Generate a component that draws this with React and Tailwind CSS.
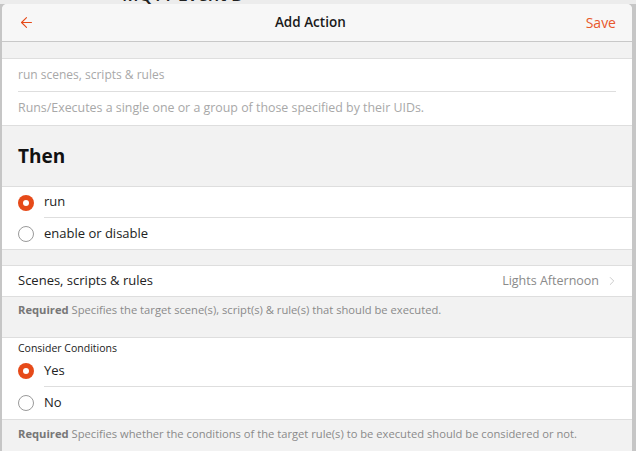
import { ArrowLeft, ChevronRight } from 'lucide-react'

const font = { fontFamily: '"Open Sans", "Noto Sans", sans-serif' }

const Radio = ({ checked }) =>
  checked ? (
    <span className="flex h-4 w-4 shrink-0 items-center justify-center rounded-full bg-[#e64a19]">
      <span className="h-[6px] w-[6px] rounded-full bg-white" />
    </span>
  ) : (
    <span className="h-4 w-4 shrink-0 rounded-full border border-[#9a9a9a] bg-white" />
  )

const RadioRow = ({ label, checked, last, tall }) => (
  <div className={`flex items-center pl-[16px] ${tall ? 'h-[32px]' : 'h-[31px]'}`}>
    <Radio checked={checked} />
    <div
      className={`ml-[10px] flex h-full flex-1 items-center text-[13px] text-[#222] ${
        last ? '' : 'border-b border-[#dedede]'
      }`}
    >
      {label}
    </div>
  </div>
)

export default function App() {
  return (
    <div className="flex h-[451px] w-[636px] flex-col overflow-hidden bg-[#c6c6c6]" style={font}>
      <div className="h-[4px] shrink-0 overflow-hidden bg-[#ececec] pl-[122px]">
        <div className="-mt-[17px] text-[18px] font-semibold leading-[22px] text-[#222]">MQTT Event B</div>
      </div>
      <div className="ml-[2px] mr-[4px] flex flex-1 flex-col overflow-hidden rounded-t-[5px] bg-[#f2f2f2]">
        <div className="flex h-[38px] shrink-0 items-center justify-between border-b border-[#c8c8c8] bg-[#f7f7f7] px-[16px]">
          <ArrowLeft className="h-[17px] w-[17px] text-[#e64a19]" strokeWidth={1.5} />
          <div className="text-[13.5px] font-semibold text-[#1a1a1a]">Add Action</div>
          <div className="text-[14px] text-[#e8582c]">Save</div>
        </div>

        <div className="mt-[16px] border-y border-[#dedede] bg-white">
          <div className="mx-[16px] flex h-[33px] items-center border-b border-[#dedede] text-[12px] text-[#a8a8a8]">
            run scenes, scripts &amp; rules
          </div>
          <div className="flex h-[33px] items-center px-[16px] text-[12.4px] text-[#a8a8a8]">
            Runs/Executes a single one or a group of those specified by their UIDs.
          </div>
        </div>

        <div className="flex h-[60px] items-center px-[16px] text-[19px] font-bold text-[#111]">Then</div>

        <div className="border-y border-[#dedede] bg-white">
          <RadioRow label="run" checked />
          <RadioRow label="enable or disable" last />
        </div>

        <div className="mt-[15px] flex h-[32px] items-center justify-between border-y border-[#dedede] bg-white pl-[16px] pr-[13px]">
          <span className="text-[13px] text-[#222]">Scenes, scripts &amp; rules</span>
          <span className="flex items-center text-[12.5px] text-[#8a8a8a]">
            Lights Afternoon
            <ChevronRight className="ml-[6px] h-[14px] w-[14px] text-[#c4c4c4]" strokeWidth={1.5} />
          </span>
        </div>
        <div className="h-[40px] px-[16px] pt-[5px] text-[11.2px] text-[#8a8a8a]">
          <b className="font-bold text-[#777]">Required</b> Specifies the target scene(s), script(s) &amp; rule(s) that
          should be executed.
        </div>

        <div className="border-y border-[#dedede] bg-white">
          <div className="h-[17px] px-[16px] pt-[3px] text-[10.5px] leading-[15px] text-[#222]">Consider Conditions</div>
          <RadioRow label="Yes" checked tall />
          <RadioRow label="No" last tall />
        </div>
        <div className="px-[16px] pt-[6px] text-[11.2px] text-[#8a8a8a]">
          <b className="font-bold text-[#777]">Required</b> Specifies whether the conditions of the target rule(s) to be
          executed should be considered or not.
        </div>
      </div>
    </div>
  )
}
